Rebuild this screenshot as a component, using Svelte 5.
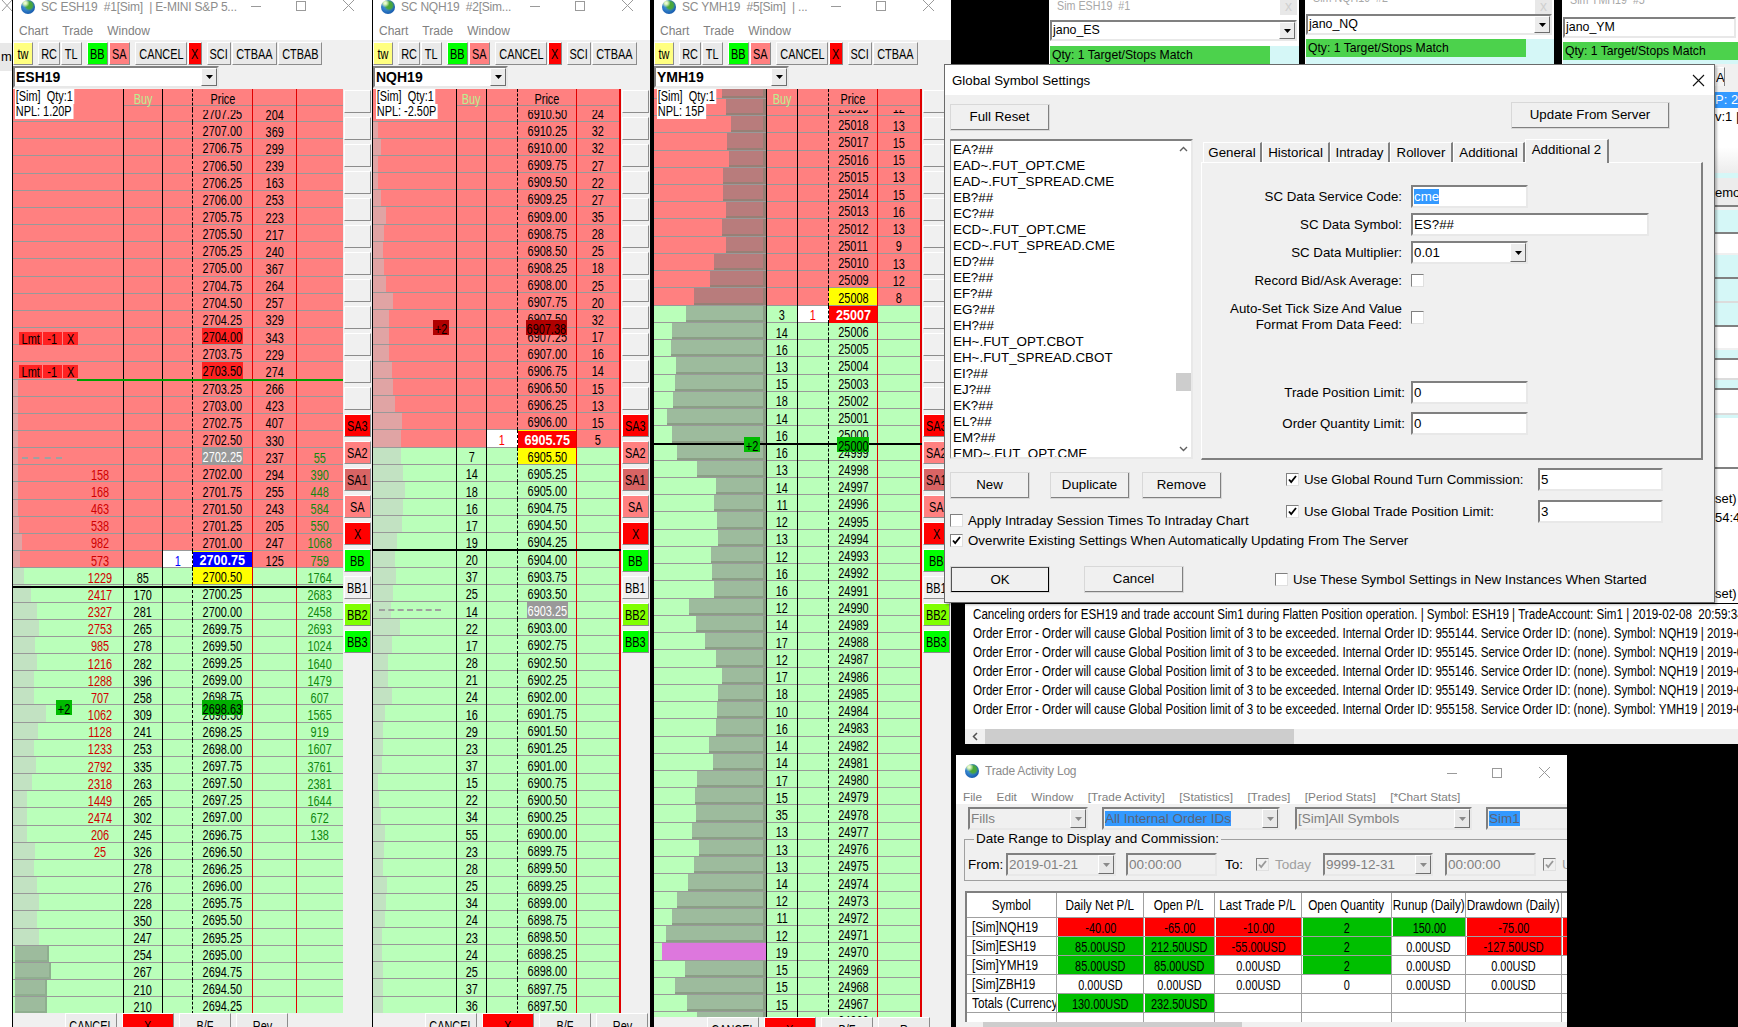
<script lang="ts">
  // Sierra-Chart style desktop: three DOM ladders, settings dialog, message log, trade activity log.
  const nums = (s: string) => s.split(' ');

  function ladder(o: any) {
    const rows = [];
    for (let i = 0; i < o.n; i++) {
      const price = o.price(i);
      rows.push({
        price,
        hidePrice: o.hide === i,
        green: i >= o.greenFrom,
        bar: o.bars ? o.bars(i) : 0,
        dark: o.dark ? o.dark(i) : false,
        pink: o.pink === i,
        left: o.left ? (o.left[i - o.leftAt] ?? '') : '',
        bid: o.bid[i - o.bidAt] ?? '',
        ask: o.ask[i - (o.askAt ?? 0)] ?? '',
        six: o.six ? (o.six[i - o.sixAt] ?? '') : '',
        qty: o.qty?.[price] ?? '',
        kind: o.kinds[price] ?? '',
      });
    }
    return rows;
  }

  const ch1Bars = [5,5,5,5,5,5,5,5,6,9,7,11,18,24,26,22,24,21,21,33,25,21,23,19,14,14,14,22,21,24,26,24,26,34,36,32,32];
  const ch2Ends = [0,20,29,20,20,29,43,37,35,37,43,60,50,50,50,58,61,66,85,82,82,88,93,88,85,73,66,69,60,55,80,58,47,47,58,40,35,35,32,21,23,29,40,37,35,44,43,40,32,32,35,35,35];
  const ch3Lefts = [933,944,958,947,952,936,936,944,934,944,912,902,859,838,800,797,811,808,803,787,800,813,866,917,912,920,922,904,906,912,845,864,888,917,933,922,920,917,898,909,866,861,864,853,872,858,842,813,800,785,773,834,808,840,866];

  const esRows = ladder({
    n: 53,
    price: (i: number) => (2707.25 - i * 0.25).toFixed(2),
    greenFrom: 27,
    bars: (i: number) => (i >= 16 ? ch1Bars[i - 16] : 0),
    dark: (i: number) => i >= 49,
    left: nums('158 168 463 538 982 573 1229 2417 2327 2753 985 1216 1288 707 1062 1128 1233 2792 2318 1449 2474 206 25'),
    leftAt: 21,
    bid: nums('85 170 281 265 278 282 396 258 309 241 253 335 263 265 302 245 326 278 276 228 350 247 254 267 210 210'),
    bidAt: 27,
    ask: nums('204 369 299 239 163 253 223 217 240 367 264 257 329 343 229 274 266 423 407 330 237 294 255 243 205 247 125'),
    six: nums('55 390 448 584 550 1068 759 1764 2683 2458 2693 1024 1640 1479 607 1565 919 1607 3761 2381 1644 672 138'),
    sixAt: 20,
    qty: { '2700.75': '1' },
    kinds: { '2704.00': 'lim', '2703.50': 'lim', '2702.25': 'grey', '2700.75': 'lastb', '2700.50': 'yel' },
  });

  const nqRows = ladder({
    n: 53,
    price: (i: number) => (6910.5 - i * 0.25).toFixed(2),
    greenFrom: 20,
    bars: (i: number) => Math.max(0, (ch2Ends[i] - 8) / 2.658),
    bid: nums('7 14 18 16 17 19 20 37 25 14 22 17 28 21 24 16 29 23 37 15 22 34 55 23 28 25 34 24 23 24 25 37 36'),
    bidAt: 20,
    ask: nums('24 32 32 27 22 27 35 28 25 18 25 20 32 17 16 14 15 13 15 5'),
    qty: { '6905.75': '1' },
    kinds: { '6905.75': 'lastr', '6905.50': 'yel', '6903.25': 'grey' },
  });

  const ymRows = ladder({
    n: 55,
    price: (i: number) => String(25020 - i),
    hide: 0,
    greenFrom: 13,
    bars: (i: number) => (1050 - ch3Lefts[i]) / 2.658,
    dark: () => true,
    pink: 50,
    bid: nums('3 14 16 13 15 18 14 16 16 13 14 11 12 13 12 16 16 12 14 17 12 17 18 10 16 14 14 17 15 35 13 13 13 14 12 11 12 19 15 15 15'),
    bidAt: 13,
    ask: nums('12 13 15 15 13 15 16 13 9 13 12 8'),
    askAt: 1,
    qty: { '25007': '1' },
    kinds: { '25008': 'yel', '25007': 'lastr' },
  });

  const toolbar = [
    { t: 'tw', c: 'tw', w: 20 }, { t: 'RC', c: 'gap', w: 22 }, { t: 'TL', c: '', w: 21 },
    { t: 'BB', c: 'gap lime', w: 21 }, { t: 'SA', c: 'sa', w: 21 },
    { t: 'CANCEL', c: 'gap', w: 52 }, { t: 'X', c: 'red', w: 14 },
    { t: 'SCI', c: 'gap', w: 24 }, { t: 'CTBAA', c: '', w: 45 },
  ];

  const blanks = Array.from({ length: 12 });
  const sideBtns = [
    ['SA3', 'red'], ['SA2', 'sa'], ['SA1', 'sa1'], ['SA', 'sa'], ['X', 'red'],
    ['BB', 'lime'], ['BB1', ''], ['BB2', 'bb2'], ['BB3', 'lime'],
  ];
  const bottomBtns = [['CANCEL', ''], ['X', 'red'], ['B/F', ''], ['Rev', '']];

  const charts = [
    { cls: 'es', title: 'SC ESH19  #1[Sim]  | E-MINI S&P 5...', sym: 'ESH19', rows: esRows, extra: true, qtyCls: 'qb', info: ['[Sim]  Qty:1', 'NPL: 1.20P'] },
    { cls: 'nq', title: 'SC NQH19  #2[Sim...', sym: 'NQH19', rows: nqRows, extra: false, qtyCls: 'qr', info: ['[Sim]  Qty:1', 'NPL: -2.50P'] },
    { cls: 'ym', title: 'SC YMH19  #5[Sim]  | ...', sym: 'YMH19', rows: ymRows, extra: false, qtyCls: 'qr', info: ['[Sim]  Qty:1', 'NPL: 15P'] },
  ];

  const symbols = nums('EA?## EAD~.FUT_OPT.CME EAD~.FUT_SPREAD.CME EB?## EC?## ECD~.FUT_OPT.CME ECD~.FUT_SPREAD.CME ED?## EE?## EF?## EG?## EH?## EH~.FUT_OPT.CBOT EH~.FUT_SPREAD.CBOT EI?## EJ?## EK?## EL?## EM?## EMD~.FUT_OPT.CME');

  const tabs = [
    { t: 'General', w: 59 }, { t: 'Historical', w: 68 }, { t: 'Intraday', w: 60 },
    { t: 'Rollover', w: 63 }, { t: 'Additional', w: 72 }, { t: 'Additional 2', w: 84, on: true },
  ];

  // what shows of the far right window, top to bottom: height, kind, text
  const strip = [
    [3, 'gy', ''], [19, 'tab', 'A'], [6, 'gy', ''], [16, 'blue', 'P: 2'], [65, 'wh top', 'v:1 | T'], [5, 'cy', ''],
    [27, 'bt', 'emo'], [2, 'ln', ''], [3, 'gy', ''], [22, 'cy', ''], [2, 'ln', ''], [19, 'wh', ''], [2, 'gy', ''],
    [22, 'cy', ''], [2, 'ln', ''], [22, 'cy', ''], [2, 'lt', ''], [22, 'cy', ''], [2, 'ln', ''], [21, 'wh', ''],
    [2, 'gy', ''], [8, 'cy', ''], [2, 'ln', ''], [18, 'wh', ''], [2, 'lt', ''], [8, 'cy', ''], [2, 'ln', ''],
    [23, 'wh', ''], [2, 'lt', ''], [3, 'cy', ''], [49, 'wh', ''], [2, 'ln', ''], [21, 'wh', ''],
    [19, 'wh', 'set) |'], [18, 'wh', '54:46'], [58, 'wh', ''], [18, 'wh', 'set) |'],
  ];

  const orderErr = (id: number, sym: string) =>
    `Order Error - Order will cause Global Position limit of 3 to be exceeded. Internal Order ID: ${id}. Service Order ID: (none). Symbol: ${sym} | 2019-02-08  20:59:34`;
  const logLines = [
    'Canceling orders for ESH19 and trade account Sim1 during Flatten Position operation. | Symbol: ESH19 | TradeAccount: Sim1 | 2019-02-08  20:59:34',
    orderErr(955144, 'NQH19'), orderErr(955145, 'NQH19'), orderErr(955146, 'NQH19'), orderErr(955149, 'NQH19'), orderErr(955158, 'YMH19'),
  ];

  const statHead = ['Symbol', 'Daily Net P/L', 'Open P/L', 'Last Trade P/L', 'Open Quantity', 'Runup (Daily)', 'Drawdown (Daily)', 'p'];
  const statRows = [
    [['[Sim]NQH19', 'sym'], ['-40.00', 'r'], ['-65.00', 'r'], ['-10.00', 'r'], ['2', 'g'], ['150.00', 'g'], ['-75.00', 'r'], ['', 'r']],
    [['[Sim]ESH19', 'sym'], ['85.00USD', 'g'], ['212.50USD', 'g'], ['-55.00USD', 'r'], ['2', 'g'], ['0.00USD', ''], ['-127.50USD', 'r'], ['', 'r']],
    [['[Sim]YMH19', 'sym'], ['85.00USD', 'g'], ['85.00USD', 'g'], ['0.00USD', ''], ['2', 'g'], ['0.00USD', ''], ['0.00USD', ''], ['', '']],
    [['[Sim]ZBH19', 'sym'], ['0.00USD', ''], ['0.00USD', ''], ['0.00USD', ''], ['0', ''], ['0.00USD', ''], ['0.00USD', ''], ['', '']],
    [['Totals (Currency)', 'sym'], ['130.00USD', 'g'], ['232.50USD', 'g'], ['', ''], ['', ''], ['', ''], ['', ''], ['', '']],
    [['', ''], ['', ''], ['', ''], ['', ''], ['', ''], ['', ''], ['', ''], ['', '']],
  ];
  const activityMenu = ['File', 'Edit', 'Window', '[Trade Activity]', '[Statistics]', '[Trades]', '[Period Stats]', '[*Chart Stats]'];
</script>

{#snippet winCtl(stroke)}
  <svg class="ctl" width="118" height="14" viewBox="0 0 118 14" fill="none" stroke={stroke}>
    <path d="M0 6.5h10" />
    <rect x="45.5" y="1.5" width="9" height="9" />
    <path d="M92 0l11 11M103 0L92 11" />
  </svg>
{/snippet}

{#snippet arrow()}
  <span class="drop"><svg width="7" height="4" viewBox="0 0 7 4"><path d="M0 0h7L3.5 4z" fill="#000" /></svg></span>
{/snippet}

{#snippet arrowOff()}
  <span class="drop off"><svg width="7" height="4" viewBox="0 0 7 4"><path d="M0 0h7L3.5 4z" fill="#8a8a8a" /></svg></span>
{/snippet}

{#snippet check(on, off = false)}
  <span class="cb" class:cboff={off}>
    {#if on}<svg width="9" height="9" viewBox="0 0 9 9"><path d="M1 4.5l2.2 2.6L8 1" fill="none" stroke={off ? '#999' : '#000'} stroke-width="1.8" /></svg>{/if}
  </span>
{/snippet}

<div class="desk">
  <!-- sliver of the window behind chart 1 -->
  <div class="sliver">
    <svg width="12" height="14" viewBox="0 0 12 14" fill="none" stroke="#999"><path d="M2 0l10 11M12 0L2 11" /></svg>
    <div class="sliver-bar">me</div>
  </div>

  {#each charts as c}
    <section class="chart {c.cls}">
      <header class="tbar">
        <i class="globe"></i>
        <span class="ttl">{c.title}</span>
        {@render winCtl('#9a9a9a')}
      </header>
      <nav class="menu"><span>Chart</span><span>Trade</span><span>Window</span></nav>
      <div class="tools">
        {#each toolbar as b}
          <span class="tb {b.c}" style="width:{b.w}px"><span class="n">{b.t}</span></span>
        {/each}
        {#if c.extra}<span class="tb" style="width:44px"><span class="n">CTBAB</span></span>{/if}
      </div>
      <div class="symrow">
        <div class="combo symcombo"><b>{c.sym}</b>{@render arrow()}</div>
      </div>
      <div class="main">
        <div class="ladder">
          <div class="rows">
            {#each c.rows as r}
              <div class="row" class:green={r.green}>
                <div class="cell c1">
                  {#if r.bar}<i class="bar" class:dark={r.dark} class:pink={r.pink} style="width:{r.bar}px"></i>{/if}
                  {#if r.left}<span class="lv n">{r.left}</span>{/if}
                </div>
                <div class="cell c2"><span class="n">{r.bid}</span></div>
                <div class="cell c3 {r.qty ? c.qtyCls : ''}"><span class="n">{r.qty}</span></div>
                <div class="cell c4 {r.kind}">
                  {#if !r.hidePrice}<span class="pbox"><span class="n">{r.price}</span></span>{/if}
                </div>
                <div class="cell c5"><span class="n">{r.ask}</span></div>
                {#if c.extra}<div class="cell c6"><span class="n">{r.six}</span></div>{/if}
              </div>
            {/each}
          </div>

          <!-- column header sits over the first rows -->
          <div class="row hdr">
            <div class="cell c1 clear"></div>
            <div class="cell c2 buy"><span class="n">Buy</span></div>
            <div class="cell c3"></div>
            <div class="cell c4"><span class="n">Price</span></div>
            <div class="cell c5"></div>
            {#if c.extra}<div class="cell c6"></div>{/if}
          </div>
          <div class="info"><span>{c.info[0]}</span><span>{c.info[1]}</span></div>

          <i class="pos-line"></i>
          <span class="pl"><span class="n">+2</span></span>
          <span class="avg"><span class="n">{c.cls === 'es' ? '2698.63' : c.cls === 'nq' ? '6907.38' : '25000'}</span></span>
          {#if c.cls !== 'ym'}<i class="dash"></i>{/if}
          {#if c.cls === 'es'}
            <i class="tgt"></i>
            <div class="lmt l1"><span><span class="n">Lmt</span></span><span><span class="n">-1</span></span><span><span class="n">X</span></span></div>
            <div class="lmt l2"><span><span class="n">Lmt</span></span><span><span class="n">-1</span></span><span><span class="n">X</span></span></div>
          {/if}
        </div>
        <aside class="side">
          {#each blanks as _}<span class="sb"></span>{/each}
          {#each sideBtns as b}<span class="sb {b[1]}"><span class="n">{b[0]}</span></span>{/each}
        </aside>
      </div>
      <footer class="foot">
        {#each bottomBtns as b}<span class="fb {b[1]}"><span class="n">{c.cls === 'ym' && b[0] === 'Rev' ? 'R' : b[0]}</span></span>{/each}
      </footer>
    </section>
  {/each}

  <!-- account / target windows behind the dialog -->
  <div class="acct a"><div class="a-ttl"><span>Sim ESH19  #1</span><i class="a-x">x</i></div><div class="combo acombo">jano_ES{@render arrow()}</div><div class="status"><span>Qty: 1 Target/Stops Match</span></div></div>
  <div class="acct b"><div class="a-ttl"><span>Sim NQH19  #2</span><i class="a-x">x</i></div><div class="combo acombo">jano_NQ{@render arrow()}</div><div class="status"><span>Qty: 1 Target/Stops Match</span></div></div>
  <div class="acct c"><div class="a-ttl"><span>Sim YMH19  #5</span></div><div class="combo acombo">jano_YM</div><div class="status"><span>Qty: 1 Target/Stops Match</span></div></div>

  <!-- strip of the far right window showing past the dialog -->
  <div class="strip">
    {#each strip as s}<div class="seg {s[1]}" style="height:{s[0]}px">{s[2]}</div>{/each}
  </div>

  <!-- message log -->
  <div class="log">
    <div class="log-lines">
      {#each logLines as l}<div class="log-line">{l}</div>{/each}
    </div>
    <div class="hscroll">
      <svg width="9" height="15" viewBox="0 0 9 15" fill="none" stroke="#505050" stroke-width="1.5"><path d="M6 4L2.5 7.5 6 11" /></svg>
      <i class="log-thumb"></i>
    </div>
  </div>

  <!-- trade activity log -->
  <div class="activity">
    <header class="tbar acttbar">
      <i class="globe"></i>
      <span class="ttl">Trade Activity Log</span>
      {@render winCtl('#9a9a9a')}
    </header>
    <nav class="menu actmenu">{#each activityMenu as m}<span>{m}</span>{/each}</nav>
    <div class="act-body">
      <div class="act-combos">
        <div class="combo dis fills">Fills{@render arrowOff()}</div>
        <div class="combo dis orders"><em>All Internal Order IDs</em>{@render arrowOff()}</div>
        <div class="combo dis allsym">[Sim]All Symbols{@render arrowOff()}</div>
        <div class="combo dis acc"><em>Sim1</em></div>
      </div>
      <fieldset class="range">
        <legend>Date Range to Display and Commission:</legend>
        <span class="from">From:</span>
        <div class="combo dis dt">2019-01-21{@render arrowOff()}</div>
        <div class="combo dis tm">00:00:00</div>
        <span class="to">To:</span>
        {@render check(true, true)}
        <span class="today">Today</span>
        <div class="combo dis dt">9999-12-31{@render arrowOff()}</div>
        <div class="combo dis tm t2">00:00:00</div>
        {@render check(true, true)}
        <span class="today u">U</span>
      </fieldset>
      <div class="stats">
        <div class="st-row st-head">{#each statHead as h}<div class="st"><span class="nh">{h}</span></div>{/each}</div>
        {#each statRows as row, i}
          <div class="st-row" class:st-cut={i === statRows.length - 1}>
            {#each row as cell}
              <div class="st {cell[1]}"><span class={cell[1] === 'sym' ? 'ns' : 'n'}>{cell[0]}</span></div>
            {/each}
          </div>
        {/each}
      </div>
      <div class="act-scroll"><i></i></div>
    </div>
  </div>

  <!-- Global Symbol Settings dialog -->
  <div class="dlg">
    <div class="dlg-title">
      <span>Global Symbol Settings</span>
      <svg width="13" height="13" viewBox="0 0 13 13" fill="none" stroke="#111" stroke-width="1.1"><path d="M1 1l11 11M12 1L1 12" /></svg>
    </div>
    <div class="dlg-top">
      <span class="btn w99">Full Reset</span>
      <span class="btn update">Update From Server</span>
    </div>
    <div class="dlg-mid">
      <div class="list">
        <div class="list-items">
          {#each symbols as s}<div>{s}</div>{/each}
        </div>
        <div class="vscroll">
          <svg width="9" height="6" viewBox="0 0 9 6" fill="none" stroke="#606060" stroke-width="1.4"><path d="M1 5l3.5-3.5L8 5" /></svg>
          <i class="thumb"></i>
          <svg width="9" height="6" viewBox="0 0 9 6" fill="none" stroke="#606060" stroke-width="1.4"><path d="M1 1l3.5 3.5L8 1" /></svg>
        </div>
      </div>
      <div class="tabset">
        <div class="tabs">
          {#each tabs as t}<span class="tab" class:on={t.on} style="width:{t.w}px">{t.t}</span>{/each}
        </div>
        <div class="panel">
          <div class="frm"><span class="lab">SC Data Service Code:</span><span class="inp w117"><em>cme</em></span></div>
          <div class="frm"><span class="lab">SC Data Symbol:</span><span class="inp w238">ES?##</span></div>
          <div class="frm"><span class="lab">SC Data Multiplier:</span><div class="combo inpcombo w117">0.01{@render arrow()}</div></div>
          <div class="frm m-rec"><span class="lab">Record Bid/Ask Average:</span>{@render check(false)}</div>
          <div class="frm auto"><span class="lab two">Auto-Set Tick Size And Value<br />Format From Data Feed:</span>{@render check(false)}</div>
          <div class="frm m-tpl lim-row"><span class="lab">Trade Position Limit:</span><span class="inp w117">0</span></div>
          <div class="frm lim-row"><span class="lab">Order Quantity Limit:</span><span class="inp w117">0</span></div>
        </div>
      </div>
    </div>
    <div class="lower">
      <div class="lower-l">
        <div class="btnrow">
          <span class="btn w80">New</span>
          <span class="btn w80 dup">Duplicate</span>
          <span class="btn w80 rem">Remove</span>
        </div>
        <label class="ck ck1">{@render check(false)}Apply Intraday Session Times To Intraday Chart</label>
        <label class="ck ck2">{@render check(true)}Overwrite Existing Settings When Automatically Updating From The Server</label>
      </div>
      <div class="lower-r">
        <div class="glob"><label class="ck">{@render check(true)}Use Global Round Turn Commission:</label><span class="inp w125">5</span></div>
        <div class="glob g2"><label class="ck">{@render check(true)}Use Global Trade Position Limit:</label><span class="inp w125">3</span></div>
      </div>
    </div>
    <div class="okrow">
      <span class="btn w99 def">OK</span>
      <span class="btn w99 can">Cancel</span>
      <label class="ck use">{@render check(false)}Use These Symbol Settings in New Instances When Started</label>
    </div>
  </div>
</div>

<style>
  :global(body) { margin: 0; background: #000; }
  .desk {
    position: relative;
    width: 1738px;
    height: 1027px;
    overflow: hidden;
    background: #000;
    font-family: "Liberation Sans", Arial, sans-serif;
    font-size: 14px;
    color: #000;
  }
  i, em { font-style: normal; }
  /* the trading windows use a tall narrow bitmap font */
  .n, .nh, .ns { display: inline-block; flex: none; transform: translateY(1px) scaleX(0.78); white-space: pre; }
  .nh { transform: scaleX(0.84); }
  .ns { transform: scaleX(0.84); transform-origin: left center; }
  .sb .n, .lmt .n { transform: scaleX(0.78); }

  .sliver { position: absolute; left: 0; top: 0; width: 12px; height: 1027px; background: #fff; overflow: hidden; font-size: 13px; }
  .sliver-bar { margin-top: 26px; height: 28px; line-height: 28px; background: #e8e8e8; text-indent: 1px; }

  /* windows on the desktop */
  .chart { position: absolute; top: 0; height: 1027px; display: flex; flex-direction: column; background: #f0f0f0; overflow: hidden; }
  .chart.es { left: 13px; width: 359px; --rh: 17.17px; --cols: 111px 39px 30px 60px 44px 46px; --top: 16px; --ctl: 3px; }
  .chart.nq { left: 373px; width: 277px; --rh: 17.17px; --cols: 84px 30px 31px 59px 44px; --top: 15.5px; --ctl: 2px; }
  .chart.ym { left: 654px; width: 297px; --rh: 17.24px; --cols: 113px 31px 31px 49px 44px; --top: -7.4px; --ctl: 2px; }

  .tbar { height: 22px; flex: none; background: #fff; display: flex; align-items: flex-start; }
  .globe {
    flex: none; width: 14px; height: 14px; margin: 0 6px 0 8px; border-radius: 50%;
    background:
      radial-gradient(circle at 30% 22%, #f4ffe8 0, #cfeeb0 12%, transparent 30%),
      radial-gradient(ellipse at 58% 38%, #4aa83a 0, #4aa83a 26%, transparent 46%),
      radial-gradient(circle at 40% 40%, #4da6e8, #1a5fb0 70%, #123f80);
  }
  .ttl { flex: 1; color: #8c8c8c; white-space: pre; font-size: 12px; letter-spacing: -0.2px; line-height: 14px; overflow: hidden; }
  .ctl { flex: none; margin-right: var(--ctl); }
  .menu { height: 18px; flex: none; background: #fff; display: flex; gap: 14px; padding-left: 6px; color: #808080; font-size: 12px; line-height: 18px; white-space: nowrap; }

  .tools { height: 26px; flex: none; display: flex; align-items: center; gap: 1px; background: #f0f0f0; }
  .tb, .sb, .fb {
    box-sizing: border-box; display: flex; align-items: center; justify-content: center; overflow: hidden; flex: none;
    height: 23px; border: 1px solid; border-color: #fff #8c8c8c #8c8c8c #fff; white-space: nowrap; line-height: 1;
  }
  .tb { background: #e9e9e9; }
  .tb.gap { margin-left: 4px; }
  .tb.tw { background: #ffff80; }
  .tb.lime { background: #00ff00; }
  .tb.sa { background: #ff8080; }
  .tb.red { background: #ff0000; }

  .symrow { height: 23px; flex: none; }
  .combo {
    box-sizing: border-box; position: relative; background: #fff; white-space: nowrap; overflow: hidden;
    border: 2px solid; border-color: #808080 #e8e8e8 #e8e8e8 #808080; padding-left: 1px;
  }
  .drop {
    position: absolute; right: 0; top: 0; bottom: 0; width: 16px; background: #ececec; display: flex; align-items: center; justify-content: center;
    border: 1px solid; border-color: #fff #6e6e6e #6e6e6e #fff; box-sizing: border-box;
  }
  .drop.off { background: #e8e8e8; }
  .symcombo { height: 22px; line-height: 18px; font-size: 14px; }
  .es .symcombo { width: 206px; }
  .nq .symcombo, .ym .symcombo { width: 135px; }

  .main { flex: 1; display: flex; min-height: 0; }
  .ladder { position: relative; flex: none; overflow: hidden; background: #ff8080; }
  .es .ladder { width: 330px; }
  .nq .ladder { width: 248px; }
  .ym .ladder { width: 268px; }
  .rows { padding-top: var(--top); }
  .ym .rows { padding-top: 0; margin-top: var(--top); }

  .row { display: grid; grid-template-columns: var(--cols); height: var(--rh); background: #ff8080; }
  .row.green { background: #baffba; }
  .cell {
    position: relative; box-sizing: border-box; display: flex; align-items: center; justify-content: center;
    height: 100%; min-width: 0; box-shadow: inset 0 -1px #999; white-space: nowrap; line-height: 1;
  }
  .c1, .c2 { border-right: 1px solid #000; }
  .c1 { justify-content: flex-start; }
  .c3 { border-right: 1px dashed #000; }
  .c4, .c5 { border-right: 1px solid #e00000; }
  .nq .c5, .ym .c5 { border-right-width: 2px; }
  .c6 { color: #108810; }
  .bar { position: absolute; left: 0; top: 0; bottom: 1px; background: #e0a4a4; }
  .green .bar { background: #c2e2c2; }
  .bar.dark { background: #b87c7c; }
  .green .bar.dark { background: #9dbb9d; }
  .es .bar.dark { left: 2px; box-shadow: inset -2px -2px #8fae8f; }
  .ym .bar { left: auto; right: 0; box-shadow: inset -3px -2px rgba(120, 130, 110, 0.5); }
  .ym .green .bar.pink, .ym .bar.pink { background: #dd77dd; box-shadow: none; }
  .lv { position: relative; color: #d00000; margin-left: 67px; width: 40px; text-align: center; }
  .qb, .qr { background: #fff; }
  .qb { color: #0000ff; }
  .qr { color: #ff0000; }

  .pbox { display: flex; align-items: center; justify-content: center; align-self: stretch; margin-bottom: 1px; }
  .c4.lim .pbox { background: #ff2222; width: 41px; }
  .c4.grey .pbox { background: #999; color: #fff; width: 41px; }
  .c4.yel { background: #ffff00; box-shadow: inset 0 -1px #999; }
  .c4.lastb, .c4.lastr { color: #fff; font-weight: 700; }
  .c4.lastb .n, .c4.lastr .n { transform: translateY(1px) scaleX(0.9); }
  .c4.lastb { background: #0000ff; box-shadow: inset 0 1px #ffff00, inset 0 -1px #ffff00; }
  .c4.lastr { background: #ff0000; box-shadow: inset 0 1px #ffff00; }
  .ym .c4.lastr { box-shadow: none; }

  /* overlays on the ladder */
  .hdr { position: absolute; left: 0; top: 0; height: 21px; background: transparent; }
  .hdr .cell { background: linear-gradient(#ff8080 16px, #a09090 16px, #a09090 17px, #ff8080 17px); box-shadow: none; align-items: flex-start; padding-top: 2px; }
  .hdr .cell.clear { background: none; }
  .buy { color: #b8f090; }
  .info { position: absolute; left: 2px; top: 0; display: flex; flex-direction: column; align-items: flex-start; line-height: 15px; white-space: pre; transform: scaleX(0.78); transform-origin: left top; }
  .info span { background: #fff; padding: 0 2px 0 1px; }
  .ym .info, .nq .info { left: 3px; }
  .pos-line { position: absolute; left: 0; height: 2px; background: #000; }
  .es .pos-line { top: 497px; width: 330px; }
  .nq .pos-line { top: 460px; width: 248px; }
  .ym .pos-line { top: 354px; width: 268px; }
  .pl, .avg { position: absolute; height: 15px; display: flex; align-items: center; justify-content: center; overflow: hidden; line-height: 1; }
  .pl { width: 16px; }
  .avg { width: 41px; }
  .es .pl { left: 43px; top: 611px; background: #00bb00; }
  .es .avg { left: 189px; top: 611px; background: #00b000; }
  .nq .pl { left: 60px; top: 231px; background: #b00000; }
  .nq .avg { left: 153px; top: 231px; background: #b00000; }
  .ym .pl { left: 90px; top: 348px; background: #00bb00; }
  .ym .avg { left: 183px; top: 348px; width: 32px; background: #00b800; }
  .dash { position: absolute; border-top: 2px dashed #a0a0a0; }
  .es .dash { left: 9px; top: 368px; width: 40px; }
  .nq .dash { left: 6px; top: 520px; width: 62px; }
  .tgt { position: absolute; left: 64px; top: 290px; width: 266px; height: 2px; background: #00a000; }
  .lmt { position: absolute; left: 6px; display: flex; gap: 1px; height: 13px; line-height: 1; }
  .lmt > span { display: flex; align-items: center; justify-content: center; background: #ff2222; width: 15px; overflow: hidden; }
  .lmt > span:first-child { width: 23px; }
  .lmt > span:nth-child(2) { width: 19px; }
  .l1 { top: 243px; }
  .l2 { top: 276px; }

  .side { flex: 1; display: flex; flex-direction: column; gap: 4px; padding: 1px 1px 0; box-sizing: border-box; min-width: 0; overflow: hidden; }
  .sb { background: #f0f0f0; }
  .sb.red { background: #ff0000; }
  .sb.sa { background: #ff8080; }
  .sb.sa1 { background: #d86464; }
  .sb.lime { background: #00ff00; }
  .sb.bb2 { background: #80ff00; }

  .foot { height: 14px; flex: none; display: flex; gap: 5px; padding-left: 52px; overflow: hidden; }
  .ym .foot { height: 10px; padding-left: 53px; }
  .fb { width: 52px; background: #ececec; }
  .fb.red { background: #ff0000; }

  /* account windows */
  .acct { position: absolute; top: 0; height: 64px; background: #fff; overflow: hidden; padding-left: 1px; box-sizing: border-box; }
  .acct.a { left: 1049px; width: 250px; --ttl: 20px; --off: 0px; --gap: 5px; }
  .acct.b { left: 1305px; width: 249px; --ttl: 14px; --off: -8px; --gap: 4px; }
  .acct.c { left: 1562px; width: 176px; --ttl: 17px; --off: -6px; --gap: 4px; }
  .a-ttl { position: relative; height: var(--ttl); color: #a8a8a8; padding-left: 7px; line-height: 12px; overflow: hidden; }
  .a-ttl span { display: block; margin-top: var(--off); white-space: pre; font-size: 13.4px; transform: scaleX(0.8); transform-origin: left center; }
  .a-x { position: absolute; right: 2px; top: 0; width: 17px; height: 15px; background: #e8e8e8; color: #d0d0d0; text-align: center; }
  .acombo { height: 21px; line-height: 17px; margin-right: 2px; font-size: 12.4px; }
  .status { margin: var(--gap) -1px 0 0; height: 30px; background: #d5f7f7; }
  .status span { display: block; width: 220px; height: 18px; line-height: 18px; background: #4cd24c; padding-left: 2px; box-sizing: border-box; font-size: 12.2px; white-space: nowrap; }
  .acct.c .status span { width: 100%; }

  .strip { position: absolute; left: 1715px; top: 64px; width: 23px; height: 539px; background: #f0f0f0; overflow: hidden; font-size: 13px; white-space: nowrap; }
  .seg { line-height: 17px; overflow: hidden; }
  .seg.gy { background: #f0f0f0; }
  .seg.tab { width: 10px; line-height: 19px; background: #f4f4f4; border-right: 1px solid #808080; }
  .seg.blue { background: #3399ff; color: #fff; line-height: 16px; }
  .seg.wh { background: #fff; }
  .seg.top { background: linear-gradient(#fff 60%, #ececec); }
  .seg.cy { background: #d5f7f7; }
  .seg.bt { background: #ececec; line-height: 29px; }
  .seg.ln { background: #808080; }
  .seg.lt { background: #dcdcdc; }

  /* message log */
  .log { position: absolute; left: 965px; top: 604px; width: 773px; height: 140px; background: #fff; display: flex; flex-direction: column; overflow: hidden; }
  .log-lines { flex: 1; padding: 1px 0 0 8px; }
  .log-line { height: 19px; line-height: 19px; white-space: pre; transform: scaleX(0.83); transform-origin: left center; }
  .hscroll { height: 15px; background: #f0f0f0; display: flex; align-items: center; gap: 5px; padding-left: 6px; }
  .log-thumb { width: 309px; height: 15px; background: #cdcdcd; }

  /* trade activity log */
  .activity { position: absolute; left: 956px; top: 755px; width: 611px; height: 272px; background: #f0f0f0; display: flex; flex-direction: column; overflow: hidden; --ctl: 2px; }
  .acttbar { height: 32px; align-items: center; }
  .acttbar .globe { margin-left: 9px; }
  .acttbar .ctl { margin-top: 6px; }
  .actmenu { height: 17px; gap: 14.5px; padding-left: 7px; font-size: 11.8px; line-height: 20px; }
  .act-body { flex: 1; display: flex; flex-direction: column; min-height: 0; font-size: 13.5px; }
  .act-combos { display: flex; flex: none; margin-top: 3px; padding-left: 12px; }
  .act-combos .combo { flex: none; }
  .dis { background: #f0f0f0; color: #808080; height: 23px; line-height: 19px; flex: none; }
  .dis em { background: #3399ff; color: #5a6478; }
  .fills { width: 120px; }
  .orders { width: 178px; margin-left: 14px; }
  .allsym { width: 177px; margin-left: 15px; }
  .acc { width: 100px; margin-left: 14px; border-right: 0; }
  .range {
    flex: none; margin: 2px 0 0 8px; padding: 7px 0 0 3px; border: 1px solid #a0a0a0; border-right: 0; height: 49px; box-sizing: border-box;
    display: flex; align-items: center; white-space: nowrap; min-width: 0;
  }
  .range legend { padding: 0 2px; margin-left: 6px; line-height: 14px; }
  .from { width: 38px; flex: none; }
  .dt { width: 110px; }
  .tm { width: 91px; margin-left: 10px; }
  .to { margin-left: 8px; width: 31px; flex: none; }
  .today { margin-left: 6px; width: 48px; color: #a0a0a0; flex: none; }
  .t2 { margin: 0 7px 0 12px; }
  .u { margin-left: 6px; width: 8px; overflow: hidden; }
  .stats { flex: none; margin: 10px 0 0 9px; border-top: 2px solid #808080; border-left: 2px solid #808080; background: #fff; font-size: 14px; }
  .st-row { display: grid; grid-template-columns: 90px 87px 71px 87px 90px 74px 96px 20px; height: 19px; }
  .st-head { height: 25px; }
  .st-cut { height: 9px; }
  .st { box-sizing: border-box; border-right: 1px solid #a0a0a0; border-bottom: 1px solid #a0a0a0; display: flex; align-items: center; justify-content: center; white-space: nowrap; overflow: hidden; min-width: 0; }
  .st-cut .st { border-bottom: 0; }
  .st.sym { justify-content: flex-start; padding-left: 5px; }
  .st.r, .st.g { background-clip: content-box; padding: 0 0 0 1px; }
  .st.r { background-color: #ff0000; }
  .st.g { background-color: #00bf00; }
  .act-scroll { flex: none; margin: 0 0 0 9px; height: 5px; background: #f0f0f0; padding-left: 18px; }
  .act-scroll i { display: block; width: 259px; height: 5px; background: #cdcdcd; }

  /* settings dialog */
  .dlg {
    position: absolute; left: 944px; top: 64px; width: 771px; height: 539px; box-sizing: border-box;
    background: #f0f0f0; border: 1px solid #6a6a6a; box-shadow: 2px 2px 2px rgba(0, 0, 0, 0.25);
    font-size: 13.3px;
  }
  .dlg-title { height: 30px; background: #fff; display: flex; align-items: center; justify-content: space-between; padding: 0 9px 0 7px; }
  .dlg-top { display: flex; justify-content: space-between; align-items: flex-start; padding: 9px 44px 0 5px; }
  .btn {
    box-sizing: border-box; display: inline-block; height: 27px; line-height: 24px; text-align: center; background: #f0f0f0;
    border: solid; border-width: 1px 2px 2px 1px; border-color: #fff #808080 #808080 #fff; outline: 1px solid #d8d8d8; outline-offset: -1px; white-space: nowrap;
  }
  .w99 { width: 100px; }
  .w80 { width: 80px; }
  .update { width: 159px; margin-top: -2px; }
  .def { border: 2px solid #000; border-color: #555 #000 #000 #555; }
  .dlg-mid { display: flex; gap: 8px; margin: 8px 0 0 5px; height: 321px; }
  .list { box-sizing: border-box; width: 243px; height: 320px; background: #fff; border: 1px solid; border-width: 2px 2px 2px 1px; border-color: #808080 #e8e8e8 #e8e8e8 #808080; display: flex; overflow: hidden; }
  .list-items { flex: 1; padding: 1px 0 0 2px; line-height: 16px; white-space: nowrap; overflow: hidden; font-size: 13.4px; }
  .vscroll { width: 15px; background: #fff; display: flex; flex-direction: column; align-items: center; position: relative; padding: 5px 0; justify-content: space-between; box-sizing: border-box; }
  .thumb { position: absolute; left: 0; top: 232px; width: 15px; height: 18px; background: #cdcdcd; }
  .tabset { width: 502px; display: flex; flex-direction: column; }
  .tabs { height: 23px; display: flex; align-items: flex-end; padding-left: 2px; gap: 0; }
  .tab { box-sizing: border-box; height: 20px; line-height: 19px; text-align: center; background: #f0f0f0; border: solid #d4d4d4; border-width: 1px 2px 0 1px; border-right-color: #808080; border-left-color: #fff; border-top-color: #fff; white-space: nowrap; }
  .tab.on { height: 24px; line-height: 20px; margin-bottom: -1px; position: relative; z-index: 1; }
  .panel { box-sizing: border-box; flex: 1; border: solid; border-width: 1px 2px 2px 1px; border-color: #fff #808080 #808080 #fff; padding-top: 22px; }
  .frm { display: flex; align-items: center; gap: 9px; height: 23px; margin-bottom: 5px; white-space: nowrap; }
  .lab { width: 200px; text-align: right; flex: none; }
  .lab.two { line-height: 16px; }
  .lim-row { gap: 6px; }
  .lim-row .lab { width: 203px; }
  .m-rec { margin: 5px 0 9px; }
  .auto { height: 32px; margin: 0 0 48px; }
  .m-tpl { margin-bottom: 8px; }
  .inp { box-sizing: border-box; height: 23px; line-height: 19px; background: #fff; display: inline-block; padding-left: 1px; border: 2px solid; border-color: #808080 #e8e8e8 #e8e8e8 #808080; white-space: nowrap; }
  .inp em { background: #3399ff; color: #fff; }
  .w117 { width: 117px; }
  .w238 { width: 238px; }
  .w125 { width: 125px; }
  .inpcombo { height: 23px; line-height: 19px; }
  .cb { box-sizing: border-box; flex: none; display: inline-flex; align-items: center; justify-content: center; width: 13px; height: 13px; background: #fff; border: 1px solid; border-color: #808080 #e0e0e0 #e0e0e0 #808080; }
  .cboff { background: #f0f0f0; margin-left: 0; }
  .lower { display: grid; grid-template-columns: 336px 1fr; margin: 8px 0 0 5px; }
  .btnrow { display: flex; margin-top: 4px; }
  .dup { margin-left: 20px; }
  .rem { margin-left: 12px; }
  .ck { display: flex; align-items: center; gap: 5px; white-space: nowrap; height: 18px; }
  .ck1 { margin-top: 12px; }
  .ck2 { margin-top: 2px; }
  .glob { display: flex; align-items: center; height: 23px; }
  .glob .ck { width: 252px; }
  .g2 { margin-top: 9px; }
  .okrow { display: flex; align-items: center; margin: 17px 0 0 5px; }
  .can { margin-left: 34px; }
  .use { margin-left: 91px; }
</style>
